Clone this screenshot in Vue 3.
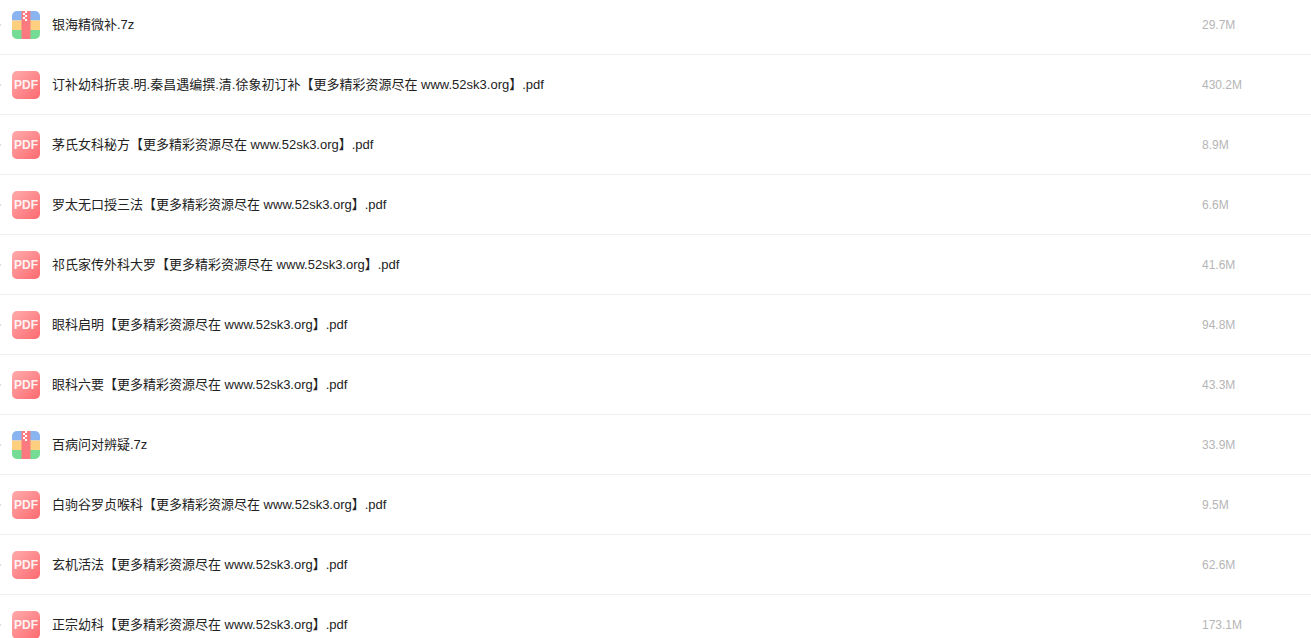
<template>
  <div class="file-list">
    <div v-for="file in files" :key="file.name" class="file-row">
      <svg v-if="file.type === 'zip'" class="file-icon" viewBox="0 0 28 28">
        <defs>
          <clipPath id="zip-clip"><rect width="28" height="28" rx="5" /></clipPath>
        </defs>
        <g clip-path="url(#zip-clip)">
          <rect width="28" height="9.5" fill="#8ab4f0" />
          <rect y="9.5" width="28" height="9.5" fill="#fdcf7e" />
          <rect y="19" width="28" height="9" fill="#74dc94" />
          <rect x="9.5" width="9" height="28" fill="#fb7a7f" />
          <rect x="13" y="0" width="2" height="2" fill="#fff" />
          <rect x="11" y="2" width="2" height="2" fill="#fff" />
          <rect x="13" y="4" width="2" height="2" fill="#fff" />
          <rect x="11" y="6" width="2" height="2" fill="#fff" />
          <rect x="13" y="8" width="2" height="2" fill="#fff" />
        </g>
      </svg>
      <div v-else class="file-icon pdf-icon">PDF</div>
      <div class="file-name">{{ file.name }}</div>
      <div class="file-size">{{ file.size }}</div>
    </div>
  </div>
</template>

<script setup>
const suffix = '【更多精彩资源尽在 www.52sk3.org】.pdf'

const files = [
  { type: 'zip', name: '银海精微补.7z', size: '29.7M' },
  { type: 'pdf', name: '订补幼科折衷.明.秦昌遇编撰.清.徐象初订补' + suffix, size: '430.2M' },
  { type: 'pdf', name: '茅氏女科秘方' + suffix, size: '8.9M' },
  { type: 'pdf', name: '罗太无口授三法' + suffix, size: '6.6M' },
  { type: 'pdf', name: '祁氏家传外科大罗' + suffix, size: '41.6M' },
  { type: 'pdf', name: '眼科启明' + suffix, size: '94.8M' },
  { type: 'pdf', name: '眼科六要' + suffix, size: '43.3M' },
  { type: 'zip', name: '百病问对辨疑.7z', size: '33.9M' },
  { type: 'pdf', name: '白驹谷罗贞喉科' + suffix, size: '9.5M' },
  { type: 'pdf', name: '玄机活法' + suffix, size: '62.6M' },
  { type: 'pdf', name: '正宗幼科' + suffix, size: '173.1M' }
]
</script>

<style>
html, body {
  overflow: hidden;
  background: #fff;
}
</style>

<style scoped>
.file-list {
  margin-top: -5px;
  font-family: "Liberation Sans", "Noto Sans CJK SC", sans-serif;
}

.file-row {
  position: relative;
  display: flex;
  align-items: center;
  height: 60px;
  box-sizing: border-box;
  padding-left: 12px;
  border-bottom: 1px solid #eee;
}

/* clipped edge of the row's selector */
.file-row::before {
  content: "";
  position: absolute;
  left: 0;
  top: 29px;
  width: 1px;
  height: 2px;
  background: #ddd;
}

.file-icon {
  flex: none;
  width: 28px;
  height: 28px;
  margin-top: 1px;
}

.pdf-icon {
  display: flex;
  align-items: center;
  justify-content: center;
  border-radius: 5px;
  background: linear-gradient(135deg, #ffabab, #fd6a70);
  color: rgba(255, 255, 255, .9);
  font-size: 12px;
  font-weight: bold;
}

.file-name {
  flex: 1;
  margin-left: 12px;
  margin-top: -3px;
  font-size: 13px;
  color: #222;
}

.file-size {
  width: 109px;
  margin-top: 1px;
  font-size: 12px;
  color: #b5b5b5;
}
</style>
